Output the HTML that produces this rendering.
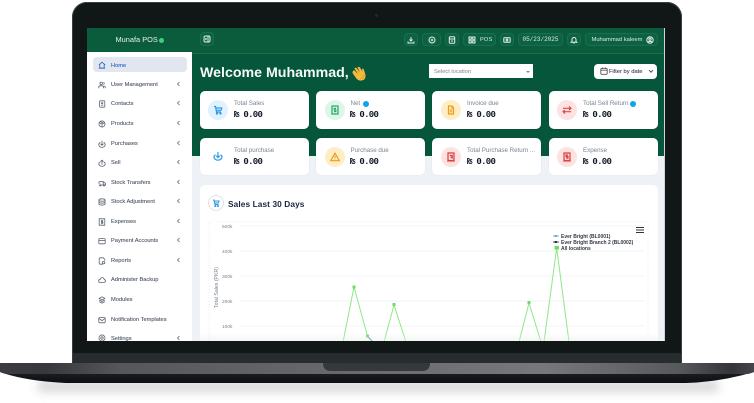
<!DOCTYPE html>
<html><head><meta charset="utf-8"><style>
html,body{margin:0;padding:0;background:#fff}
#r{position:relative;width:754px;height:403px;overflow:hidden;background:#fff;font-family:"Liberation Sans",sans-serif}
.a{position:absolute}
.t{position:absolute;white-space:nowrap;line-height:10px;height:10px}
.nav{position:absolute;left:111px;margin-top:1px;font-size:5.7px;color:#4b5563;white-space:nowrap;line-height:8px;height:8px;-webkit-text-stroke:.1px #4b5563}
.ch{position:absolute;left:176px;width:5px;height:8px}
.ni{position:absolute;left:97.500px;margin-top:1px;width:8px;height:8px;fill:none;stroke:#5a6472;stroke-width:1}
.btn{position:absolute;top:33px;height:13px;background:#0d6244;border:.5px solid #17704f;border-radius:4px;box-sizing:border-box;color:#dbe9e3;font-size:5.6px;line-height:12px;text-align:center;white-space:nowrap}
.btn svg{position:absolute;left:50%;top:50%;margin:-4px 0 0 -4px;width:8px;height:8px;fill:none;stroke:#e5efea;stroke-width:1}
.card{position:absolute;width:109px;background:#fff;border-radius:5px;box-shadow:0 0 1px rgba(0,0,0,.1)}
.ic{position:absolute;width:20px;height:20px;border-radius:50%}
.ic svg{position:absolute;left:5px;top:5px;width:10px;height:10px;fill:none;stroke-width:1.2}
.lb{position:absolute;font-size:6.2px;color:#7a8494;white-space:nowrap;line-height:8px}
.v{position:absolute;font-family:"Liberation Mono","DejaVu Sans Mono",monospace;font-weight:700;font-size:9px;letter-spacing:-.7px;color:#111827;white-space:nowrap;line-height:10px}
.info{position:absolute;width:6px;height:6px;border-radius:50%;background:#0ea5e9}
</style></head><body><div id="r">

<div class="a" style="left:38px;top:380px;width:680px;height:12px;background:#d6d6d6;filter:blur(5px)"></div>

<div class="a" style="left:72px;top:2px;width:610px;height:362px;background:#111617;border-radius:15px 15px 0 0;box-shadow:inset 0 0 0 1px #3a3f42"></div>
<div class="a" style="left:73px;top:353px;width:608px;height:10px;background:#272c2e"></div>
<div class="a" style="left:375px;top:13.5px;width:3px;height:3px;border-radius:50%;background:#25292b"></div>

<svg class="a" style="left:0;top:363px" width="754" height="21" viewBox="0 0 754 21">
<defs>
<linearGradient id="g" x1="0" x2="1" y1="0" y2="0">
<stop offset="0" stop-color="#3a3c40"/><stop offset=".06" stop-color="#36383b"/><stop offset=".16" stop-color="#55575b"/><stop offset=".5" stop-color="#6a6c70"/><stop offset=".72" stop-color="#76787c"/><stop offset=".9" stop-color="#58595d"/><stop offset=".97" stop-color="#333538"/><stop offset="1" stop-color="#44464a"/>
</linearGradient>
<linearGradient id="h" x1="0" x2="0" y1="0" y2="1"><stop offset="0" stop-color="#2a2c30"/><stop offset="1" stop-color="#0d0e11"/></linearGradient>
</defs>
<path d="M0 0H754V9Q720 19 686 20H66Q25 18 0 9Z" fill="url(#h)"/>
<path d="M0 0H754V9Q752 10 748 11H6Q2 10 0 9Z" fill="url(#g)"/>
<path d="M323 0H430Q430 8 422 8H331Q323 8 323 0Z" fill="#36393c"/>
</svg>

<!-- screen -->
<div class="a" style="left:87px;top:28px;width:578px;height:313px;background:#eef1f6;overflow:hidden">
  <div class="a" style="left:0;top:0;width:578px;height:128px;background:#05563a"></div>
  <div class="a" style="left:0;top:0;width:578px;height:24.5px;background:#0a5c3d;border-bottom:.5px solid #1a6a50"></div>
  <div class="a" style="left:0;top:24px;width:105px;height:289px;background:#fff"></div>
  <div class="a" style="left:577px;top:0;width:1px;height:313px;background:#cfd3db"></div>
</div>

<div class="t" style="left:115.500px;top:35px;font-size:7.4px;color:#e8f2ed">Munafa POS</div>
<div class="a" style="left:159px;top:38px;width:5px;height:5px;border-radius:50%;background:#3fd07a"></div>

<div class="a" style="left:93px;top:57px;width:94px;height:15px;background:#e2e6ee;border-radius:4px"></div>

<svg class="ni" style="top:60px;stroke:#2563c9" viewBox="0 0 10 10"><path d="M1 5 5 1.500 9 5M2.300 4.500V9H7.700V4.500M1 8.800H9"/></svg>
<div class="nav" style="top:60.500px;color:#2563c9;-webkit-text-stroke:.1px #2563c9">Home</div>
<svg class="ni" style="top:80px" viewBox="0 0 10 10"><circle cx="4" cy="3" r="1.600"/><path d="M1 9V7.500Q1 6 3 6H5Q7 6 7 7.500V9M7 1.500Q8.500 3 7 4.500M9 9V7.500L8 6"/></svg>
<div class="nav" style="top:80px">User Management</div>
<svg class="ni" style="top:99px" viewBox="0 0 10 10"><rect x="2" y="1" width="6.500" height="8" rx="1"/><circle cx="5.200" cy="4" r=".8"/><path d="M4 6.500H6.500"/></svg>
<div class="nav" style="top:99px">Contacts</div>
<svg class="ni" style="top:119px" viewBox="0 0 10 10"><circle cx="5" cy="5" r="3.800"/><path d="M1.500 3.500 5 5 8.500 3.500M5 5V9M3 2 7 4"/></svg>
<div class="nav" style="top:119px">Products</div>
<svg class="ni" style="top:138.500px" viewBox="0 0 10 10"><path d="M2.800 3Q1 4 1 6A4 3.200 0 0 0 9 6Q9 4 7.200 3M5 1V6.500M3.200 4.800 5 6.500 6.800 4.800"/></svg>
<div class="nav" style="top:138.500px">Purchases</div>
<svg class="ni" style="top:158px" viewBox="0 0 10 10"><path d="M2.800 3.500Q1 4.500 1 6A4 3.200 0 0 0 9 6Q9 4.500 7.200 3.500M5 7V1.500M3.200 3.200 5 1.500 6.800 3.200"/></svg>
<div class="nav" style="top:158px">Sell</div>
<svg class="ni" style="top:177.500px" viewBox="0 0 10 10"><path d="M1 3H6.500V7.500H1M6.500 4.500H8.500L9.500 6V7.500H6.500M0 5H3"/><circle cx="3" cy="8" r=".8"/><circle cx="7.500" cy="8" r=".8"/></svg>
<div class="nav" style="top:177.500px">Stock Transfers</div>
<svg class="ni" style="top:197px" viewBox="0 0 10 10"><ellipse cx="5" cy="2.500" rx="3.800" ry="1.500"/><path d="M1.200 2.500V7.500C1.200 9.300 8.800 9.300 8.800 7.500V2.500M1.200 5C1.200 6.800 8.800 6.800 8.800 5"/></svg>
<div class="nav" style="top:197px">Stock Adjustment</div>
<svg class="ni" style="top:216.500px" viewBox="0 0 10 10"><path d="M1.500 1H8.500V9H1.500ZM5 2.500V7.500M6.500 3.500H4.300V5H6V6.500H3.800"/></svg>
<div class="nav" style="top:216.500px">Expenses</div>
<svg class="ni" style="top:236px" viewBox="0 0 10 10"><rect x="1" y="2" width="8" height="6.500" rx="1"/><path d="M1 4.300H9"/></svg>
<div class="nav" style="top:236px">Payment Accounts</div>
<svg class="ni" style="top:256px" viewBox="0 0 10 10"><path d="M6 9H2.500Q1.500 9 1.500 8V2Q1.500 1 2.500 1H6.500L8.500 3V4.500"/><circle cx="7" cy="7" r="1.500"/></svg>
<div class="nav" style="top:256px">Reports</div>
<svg class="ni" style="top:275px" viewBox="0 0 10 10"><path d="M2.500 8Q.8 8 .8 6.200T2.700 4.300Q3.300 2 5.300 2T7.800 4.300Q9.300 4.600 9.300 6.200T7.500 8Z"/></svg>
<div class="nav" style="top:275px">Administer Backup</div>
<svg class="ni" style="top:295px" viewBox="0 0 10 10"><path d="M5 1 8.500 3 5 5 1.500 3ZM1.500 5 5 7 8.500 5M1.500 7 5 9 8.500 7"/></svg>
<div class="nav" style="top:295px">Modules</div>
<svg class="ni" style="top:314.500px" viewBox="0 0 10 10"><rect x="1" y="2" width="8" height="6.500" rx="1"/><path d="M1 3 5 5.800 9 3"/></svg>
<div class="nav" style="top:314.500px">Notification Templates</div>
<svg class="ni" style="top:333px;clip-path:inset(0 0 1px 0)" viewBox="0 0 10 10"><circle cx="5" cy="5" r="1.500"/><circle cx="5" cy="5" r="3.800"/></svg>
<div class="nav" style="top:334px;clip-path:inset(0 0 2px 0)">Settings</div>

<svg class="ch" style="top:80px" viewBox="0 0 5 8"><path d="M3.500 2 1.500 4 3.500 6" fill="none" stroke="#7b8390" stroke-width=".9"/></svg>
<svg class="ch" style="top:99px" viewBox="0 0 5 8"><path d="M3.500 2 1.500 4 3.500 6" fill="none" stroke="#7b8390" stroke-width=".9"/></svg>
<svg class="ch" style="top:119px" viewBox="0 0 5 8"><path d="M3.500 2 1.500 4 3.500 6" fill="none" stroke="#7b8390" stroke-width=".9"/></svg>
<svg class="ch" style="top:138.500px" viewBox="0 0 5 8"><path d="M3.500 2 1.500 4 3.500 6" fill="none" stroke="#7b8390" stroke-width=".9"/></svg>
<svg class="ch" style="top:158px" viewBox="0 0 5 8"><path d="M3.500 2 1.500 4 3.500 6" fill="none" stroke="#7b8390" stroke-width=".9"/></svg>
<svg class="ch" style="top:177.500px" viewBox="0 0 5 8"><path d="M3.500 2 1.500 4 3.500 6" fill="none" stroke="#7b8390" stroke-width=".9"/></svg>
<svg class="ch" style="top:197px" viewBox="0 0 5 8"><path d="M3.500 2 1.500 4 3.500 6" fill="none" stroke="#7b8390" stroke-width=".9"/></svg>
<svg class="ch" style="top:216.500px" viewBox="0 0 5 8"><path d="M3.500 2 1.500 4 3.500 6" fill="none" stroke="#7b8390" stroke-width=".9"/></svg>
<svg class="ch" style="top:236px" viewBox="0 0 5 8"><path d="M3.500 2 1.500 4 3.500 6" fill="none" stroke="#7b8390" stroke-width=".9"/></svg>
<svg class="ch" style="top:256px" viewBox="0 0 5 8"><path d="M3.500 2 1.500 4 3.500 6" fill="none" stroke="#7b8390" stroke-width=".9"/></svg>
<svg class="ch" style="top:334px" viewBox="0 0 5 8"><path d="M3.500 2 1.500 4 3.500 6" fill="none" stroke="#7b8390" stroke-width=".9"/></svg>

<!-- header buttons -->
<div class="btn" style="left:200px;top:32px;width:14px;height:14px"><svg viewBox="0 0 8 8"><rect x="1" y="1" width="6" height="6" rx="1.500"/><path d="M5 1V7M3.500 3 2.500 4 3.500 5"/></svg></div>
<div class="btn" style="left:404px;width:14px"><svg viewBox="0 0 8 8"><path d="M4 1V5M2.500 3.500 4 5 5.500 3.500M1 5.500V7H7V5.500"/></svg></div>
<div class="btn" style="left:422px;width:19px"><svg viewBox="0 0 8 8"><circle cx="4" cy="4" r="3"/><path d="M4 2.700V5.300M2.700 4H5.300"/></svg></div>
<div class="btn" style="left:445px;width:14px"><svg viewBox="0 0 8 8"><rect x="1.300" y=".8" width="5.400" height="6.400" rx=".8"/><path d="M1.300 3H6.700M3 5H5"/></svg></div>
<div class="btn" style="left:463px;width:33px;text-align:left;padding-left:16px;letter-spacing:.2px"><svg style="left:4px;margin-left:0" viewBox="0 0 8 8"><rect x="1" y="1" width="2.300" height="2.300"/><rect x="4.700" y="1" width="2.300" height="2.300"/><rect x="1" y="4.700" width="2.300" height="2.300"/><rect x="4.700" y="4.700" width="2.300" height="2.300"/></svg>POS</div>
<div class="btn" style="left:500px;width:14px"><svg viewBox="0 0 8 8"><rect x=".8" y="1.800" width="6.400" height="4.400" rx=".5"/><circle cx="4" cy="4" r="1"/></svg></div>
<div class="btn" style="left:518px;width:45px;font-family:'Liberation Mono',monospace;font-size:6px">05/23/2025</div>
<div class="btn" style="left:567px;width:14px"><svg viewBox="0 0 8 8"><path d="M2 5.500V3.500A2 2 0 0 1 6 3.500V5.500L6.800 6.200H1.200ZM3.300 7H4.700"/></svg></div>
<div class="btn" style="left:585px;width:73px;text-align:left;padding-left:5.500px;font-size:5.800px">Muhammad kaleem<svg style="left:60px;margin-left:0" viewBox="0 0 8 8"><circle cx="4" cy="4" r="3.200"/><circle cx="4" cy="3.200" r="1.100"/><path d="M2 6.200Q4 4.400 6 6.200"/></svg></div>

<!-- welcome -->
<div class="t" style="left:200px;top:64px;height:19px;line-height:19px;font-size:14.200px;font-weight:700;color:#f5faf7">Welcome Muhammad,</div>
<svg class="a" style="left:351px;top:65px" width="16" height="17" viewBox="0 0 16 17"><path d="M3 5 7 9 3.500 3.500Q4 2 5.500 3L9 7.500 6.500 2.500Q7.500 1 9 2.500L11.500 6.500 11 4Q12.500 3 13 5L14.500 10Q15 15 10.500 15.500 7 16 5 13L1.500 8Q1.500 6 3 5Z" fill="#f5b93e"/><path d="M9 14Q13 14 13 9" fill="none" stroke="#d99a2a" stroke-width=".8"/></svg>

<div class="a" style="left:429px;top:64px;width:104px;height:14px;background:#fff"></div>
<div class="t" style="left:434px;top:66.500px;font-size:5.700px;color:#7b8390">Select location</div>
<div class="a" style="left:526px;top:70.500px;width:0;height:0;border:2px solid transparent;border-top:2.500px solid #888;border-bottom:0"></div>

<div class="a" style="left:594px;top:64px;width:63px;height:15px;background:#fff;border-radius:4px"></div>
<svg class="a" style="left:600px;top:67px;fill:none;stroke:#555;stroke-width:.9" width="8" height="8" viewBox="0 0 8 8"><rect x=".8" y="1.300" width="6.400" height="6" rx="1"/><path d="M.8 3.200H7.200M2.500 .5V2M5.500 .5V2"/></svg>
<div class="t" style="left:609px;top:66.500px;font-size:5.800px;color:#374151;-webkit-text-stroke:.1px #374151">Filter by date</div>
<svg class="a" style="left:648px;top:68.500px" width="6" height="5" viewBox="0 0 6 5"><path d="M1 1.200 3 3.200 5 1.200" fill="none" stroke="#374151" stroke-width=".9"/></svg>

<!-- cards row 1 -->
<div class="card" style="left:200px;top:91px;height:38px"></div>
<div class="ic" style="left:208px;top:100px;background:#e0f2fe"><svg viewBox="0 0 10 10" style="stroke:#2e9be6"><path d="M1 1.500H2.500L3.500 7H8M3 3H8.800L8 5.300H3.400"/><circle cx="4" cy="8.500" r=".6"/><circle cx="7.500" cy="8.500" r=".6"/></svg></div>
<div class="lb" style="left:234px;top:100px">Total Sales</div><div class="v" style="left:234px;top:110px">₨ 0.00</div>

<div class="card" style="left:316px;top:91px;height:38px"></div>
<div class="ic" style="left:324.500px;top:100px;background:#dcf7e8"><svg viewBox="0 0 10 10" style="stroke:#22a565"><rect x="2" y="1" width="6" height="8"/><path d="M6 3.300H4.300V5H5.800V6.700H4"/></svg></div>
<div class="lb" style="left:350.500px;top:100px">Net</div><div class="info" style="left:363px;top:100.500px"></div><div class="v" style="left:350px;top:110px">₨ 0.00</div>

<div class="card" style="left:432px;top:91px;height:38px"></div>
<div class="ic" style="left:441px;top:100px;background:#fdeec4"><svg viewBox="0 0 10 10" style="stroke:#ef9a1d"><path d="M6 1H2.500V9H7.500V2.800ZM6 1V3H7.500M3.800 5H6.200M3.800 6.800H6.200"/></svg></div>
<div class="lb" style="left:467px;top:100px">Invoice due</div><div class="v" style="left:467px;top:110px">₨ 0.00</div>

<div class="card" style="left:549px;top:91px;height:38px"></div>
<div class="ic" style="left:557px;top:100px;background:#fde2e2"><svg viewBox="0 0 10 10" style="stroke:#e14b4b"><path d="M1 3.300H9M7 1.500 9 3.300 7 5M9 6.700H1M3 5 1 6.700 3 8.500"/></svg></div>
<div class="lb" style="left:583px;top:100px">Total Sell Return</div><div class="info" style="left:630px;top:100.500px"></div><div class="v" style="left:583px;top:110px">₨ 0.00</div>

<!-- cards row 2 -->
<div class="card" style="left:200px;top:138px;height:37px"></div>
<svg class="a" style="left:213px;top:151px;fill:none;stroke:#2e9be6;stroke-width:1.200" width="10" height="10" viewBox="0 0 10 10"><path d="M2.500 4Q1 4.500 1 6A4 3.200 0 0 0 9 6Q9 4.500 7.500 4M5 1V6.500M3.200 4.800 5 6.500 6.800 4.800"/></svg>
<div class="lb" style="left:234px;top:146.500px">Total purchase</div><div class="v" style="left:234px;top:156.500px">₨ 0.00</div>

<div class="card" style="left:316px;top:138px;height:37px"></div>
<div class="ic" style="left:324.500px;top:146.500px;background:#fdeec4"><svg viewBox="0 0 10 10" style="stroke:#ef9a1d"><path d="M5 1.200 9.300 8.700H.7ZM5 4V6.300M5 7V7.500"/></svg></div>
<div class="lb" style="left:350.500px;top:146.500px">Purchase due</div><div class="v" style="left:350px;top:156.500px">₨ 0.00</div>

<div class="card" style="left:432px;top:138px;height:37px"></div>
<div class="ic" style="left:441px;top:146.500px;background:#fde2e2"><svg viewBox="0 0 10 10" style="stroke:#dd3c3c"><path d="M2 1H8V9L7 8.300 6 9 5 8.300 4 9 3 8.300 2 9ZM3.800 3.500H6.200V6L4.500 5"/></svg></div>
<div class="lb" style="left:467px;top:146.500px">Total Purchase Return ...</div><div class="v" style="left:467px;top:156.500px">₨ 0.00</div>

<div class="card" style="left:549px;top:138px;height:37px"></div>
<div class="ic" style="left:557px;top:146.500px;background:#fde2e2"><svg viewBox="0 0 10 10" style="stroke:#dd3c3c"><path d="M2 1H8V9L7 8.300 6 9 5 8.300 4 9 3 8.300 2 9ZM6 3H4V4.500H6V6H4"/></svg></div>
<div class="lb" style="left:583px;top:146.500px">Expense</div><div class="v" style="left:583px;top:156.500px">₨ 0.00</div>

<!-- chart card -->
<div class="a" style="left:200px;top:185px;width:458px;height:156px;background:#fff;border-radius:5px 5px 0 0"></div>
<div class="a" style="left:208px;top:195px;width:16px;height:16px;border-radius:50%;border:.6px solid #dde1e8;box-sizing:border-box"></div>
<svg class="a" style="left:212px;top:199px;fill:none;stroke:#2e9be6;stroke-width:1.100" width="8" height="8" viewBox="0 0 8 8"><path d="M1 1H2L3 5.500H6.500M2.300 2H7L6.300 4H2.800"/><circle cx="3.300" cy="7" r=".5"/><circle cx="6" cy="7" r=".5"/></svg>
<div class="t" style="left:228px;top:198.500px;font-size:8.300px;font-weight:700;color:#1e2440;letter-spacing:.1px">Sales Last 30 Days</div>

<svg class="a" style="left:200px;top:215px" width="458" height="126" viewBox="200 215 458 126">
<path d="M209 341V222H648V341" fill="none" stroke="#e6e8ec" stroke-width=".6" stroke-dasharray="1.500 1.500"/>
<path d="M240 226H645M240 251H645M240 276H645M240 301H645M240 326H645" stroke="#edeff2" stroke-width=".7" fill="none"/>
<g font-family="Liberation Sans" font-size="4.800" fill="#7b8390">
<text x="222" y="228">500k</text><text x="222" y="253">400k</text><text x="222" y="278">300k</text><text x="222" y="303">200k</text><text x="222" y="328">100k</text>
<text transform="translate(218 308) rotate(-90)" font-size="5.200">Total Sales (PKR)</text>
</g>
<path d="M343 342 354 287 367.500 336 373 341.500M384 342 394 305 406 342M519 342 529 303 541 342M544 342 556.700 248 569 342" fill="none" stroke="#8fe888" stroke-width="1"/>
<path d="M367 336 372 341" stroke="#4a7fd6" stroke-width="1" fill="none"/>
<g fill="#6fdc63"><rect x="352.500" y="285.500" width="3" height="3"/><rect x="366" y="334.500" width="3" height="3"/><rect x="392.500" y="303" width="3" height="3"/><rect x="527.500" y="301" width="3" height="3"/><rect x="554.500" y="246" width="4.500" height="3.500"/></g>
<path d="M636 227.500H644M636 230H644M636 232.500H644" stroke="#333" stroke-width="1"/>
<path d="M553 236H559" stroke="#6a9fd8" stroke-width=".8"/><rect x="554.800" y="235" width="2" height="2" fill="#6a9fd8"/>
<path d="M553 242H559" stroke="#1f2430" stroke-width=".8"/><rect x="554.800" y="241" width="2" height="2" fill="#1f2430"/>
<g font-family="Liberation Sans" font-size="5" font-weight="700" fill="#333a44">
<text x="561" y="238">Ever Bright (BL0001)</text><text x="561" y="244">Ever Bright Branch 2 (BL0002)</text><text x="561" y="250">All locations</text>
</g>
</svg>
<div class="a" style="left:200px;top:333px;width:458px;height:8px;background:linear-gradient(rgba(240,240,240,0),rgba(235,235,235,.5))"></div>

</div></body></html>
